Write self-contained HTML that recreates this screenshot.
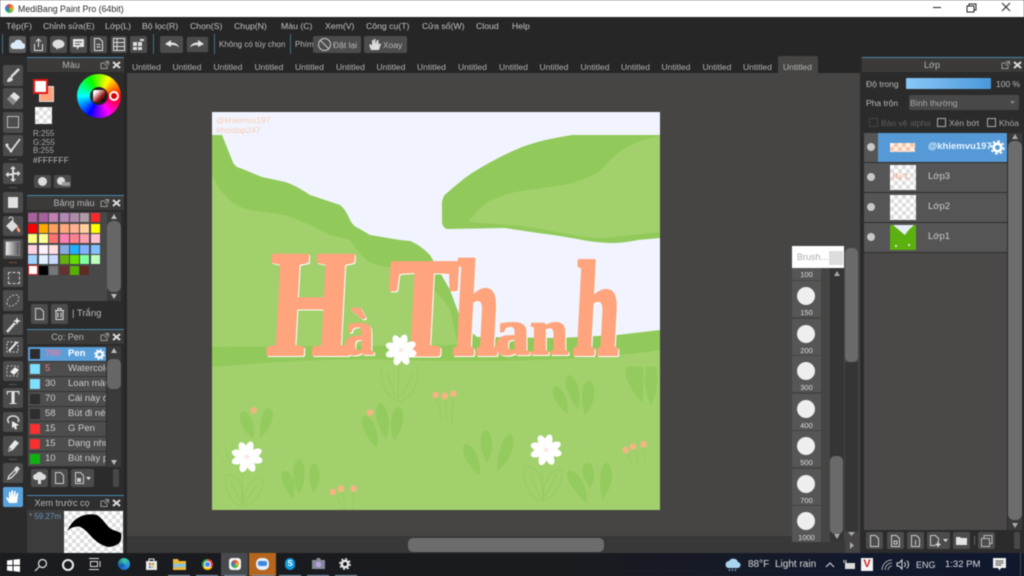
<!DOCTYPE html>
<html><head><meta charset="utf-8"><style>
html,body{margin:0;padding:0;background:#262626}
body{width:1024px;height:576px;overflow:hidden;position:relative;background:#262626;font-family:"Liberation Sans","Noto Sans CJK SC",sans-serif;font-size:9px;color:#c4c4c4;filter:blur(.4px)}
div,span.a,svg.a{position:absolute}
.t{position:absolute;white-space:nowrap;line-height:12px}
.m{position:absolute;white-space:nowrap;line-height:12px;top:20px;font-size:8.7px}
.b{position:absolute;background:#4c4c4c;border-radius:2px}
.tab{position:absolute;top:61px;white-space:nowrap;line-height:12px;color:#b4b4b4;font-size:8.5px}
.h{position:absolute;background:#3b3a39;height:14px;border-top:1px solid #4d87ad;text-align:center;line-height:15px;color:#b8b8b8;font-size:9px}
.ck{background-color:#fff;background-image:linear-gradient(45deg,#ddd 25%,transparent 25%,transparent 75%,#ddd 75%),linear-gradient(45deg,#ddd 25%,transparent 25%,transparent 75%,#ddd 75%);background-size:8px 8px;background-position:0 0,4px 4px}
.sw{position:absolute;width:9px;height:9px}
.r{position:absolute;left:28px;width:78px;height:14px;background:#4d4d4d;overflow:hidden;border-bottom:1px solid #333}
.r i{position:absolute;left:2px;top:2px;width:10px;height:10px;display:block}
.r b{position:absolute;left:17px;top:1px;font-weight:normal;line-height:12px;font-size:9.5px;color:#ccc}
.r u{position:absolute;left:40px;top:1px;text-decoration:none;line-height:12px;font-size:9.5px;color:#ccc;white-space:nowrap}
.lay{position:absolute;left:864px;width:143px;height:29px;background:#555;border-bottom:1px solid #2d2d2d}
.lay em{position:absolute;left:3px;top:10px;width:8px;height:8px;border-radius:50%;background:#c8c8c8;display:block}
.lay s{position:absolute;left:26px;top:2px;width:26px;height:25px;display:block}
.lay u{position:absolute;left:64px;top:8px;text-decoration:none;color:#ccc;font-size:9.5px;line-height:12px;white-space:nowrap}
.bi{position:absolute;left:792px;width:29px;height:36px;background:#565656}
.bi i{position:absolute;left:5px;top:6px;width:18px;height:18px;border-radius:50%;background:#eee;display:block}
.bi b{position:absolute;left:0;width:29px;top:27px;text-align:center;font-weight:normal;font-size:7.5px;line-height:10px;color:#ddd}
.ul{position:absolute;top:575px;height:1px;width:22px;background:#8fa8c0}
</style></head><body>

<div style="left:0;top:0;width:1024px;height:17px;background:#fff"></div>
<div style="left:5px;top:4px;width:9px;height:9px;border-radius:50%;background:conic-gradient(#e84a3c,#f2b233,#3cb54a,#2a7fd0,#e84a3c)"></div>
<div class="t" style="left:18px;top:3px;color:#2a2a2a;font-size:8.8px">MediBang Paint Pro (64bit)</div>
<svg class="a" style="left:930px;top:0" width="94" height="17" fill="none" stroke="#222" stroke-width="1"><path d="M3 7.500h8"/><path d="M37 6h7v6h-7zM39 6V4h7v6h-2"/><path d="M72 3l8 8M80 3l-8 8"/></svg>

<div class="m" style="left:6px">Tệp(F)</div>
<div class="m" style="left:43px">Chỉnh sửa(E)</div>
<div class="m" style="left:105px">Lớp(L)</div>
<div class="m" style="left:142px">Bộ lọc(R)</div>
<div class="m" style="left:190px">Chọn(S)</div>
<div class="m" style="left:234px">Chụp(N)</div>
<div class="m" style="left:281px">Màu (C)</div>
<div class="m" style="left:325px">Xem(V)</div>
<div class="m" style="left:366px">Công cụ(T)</div>
<div class="m" style="left:422px">Cửa sổ(W)</div>
<div class="m" style="left:476px">Cloud</div>
<div class="m" style="left:512px">Help</div>

<div style="left:2px;top:34px;width:1px;height:20px;background:#3f6f90"></div>
<div class="b" style="left:9px;top:36px;width:17px;height:17px;background:#5d5d5d"></div>
<svg class="a" style="left:10px;top:38px" width="15" height="13"><path d="M3 11h9a3 3 0 0 0 .5-6A4.500 4.500 0 0 0 4 4.500a3.300 3.300 0 0 0-1 6.500z" fill="#dcebf8"/></svg>
<div class="b" style="left:30px;top:36px;width:17px;height:17px"></div>
<svg class="a" style="left:30px;top:36px" width="17" height="17" fill="none" stroke="#ddd"><path d="M4.500 8v6.500h8V8M8.500 11V3M6 5.500l2.500-2.500 2.500 2.500"/></svg>
<div class="b" style="left:50px;top:36px;width:17px;height:17px"></div>
<svg class="a" style="left:50px;top:36px" width="17" height="17"><ellipse cx="8.500" cy="8" rx="6" ry="4.500" fill="#ddd"/><path d="M6 11l1 3 2-3z" fill="#ddd"/></svg>
<div class="b" style="left:70px;top:36px;width:17px;height:17px"></div>
<svg class="a" style="left:70px;top:36px" width="17" height="17"><path d="M3 3h11v8H9l-2 3v-3H3z" fill="#e4e4e4"/><path d="M5 6h7M5 8.500h5" stroke="#555"/></svg>
<div class="b" style="left:90px;top:36px;width:17px;height:17px"></div>
<svg class="a" style="left:90px;top:36px" width="17" height="17" fill="none" stroke="#ddd"><path d="M4.500 2.500h5l3 3v9h-8zM6.500 8.500h4M6.500 11h4"/></svg>
<div class="b" style="left:111px;top:36px;width:16px;height:17px"></div>
<svg class="a" style="left:111px;top:36px" width="16" height="17" fill="none" stroke="#ddd"><path d="M2.500 2.500h11v12h-11zM2.500 6.500h11M2.500 10.500h11M6 2.500v12"/></svg>
<div class="b" style="left:130px;top:36px;width:17px;height:17px"></div>
<svg class="a" style="left:130px;top:36px" width="17" height="17"><path d="M3 6h4v4H3zM8 6h4v4H8zM3 11h4v3H3zM8 11h4v3H8zM10 3h4v2h-4z" fill="#ddd"/></svg>
<div style="left:153px;top:34px;width:1px;height:20px;background:#3f6f90"></div>
<div class="b" style="left:160px;top:36px;width:23px;height:17px"></div>
<svg class="a" style="left:160px;top:36px" width="23" height="17"><path d="M5 8l6-4v2.500c4 0 7 1.500 8 5-2-2-4-2.500-8-2.500V11z" fill="#e4e4e4"/></svg>
<div class="b" style="left:186px;top:36px;width:23px;height:17px;border:1px solid #2b2b2b;box-sizing:border-box"></div>
<svg class="a" style="left:186px;top:36px" width="23" height="17"><path d="M18 8l-6-4v2.500c-4 0-7 1.500-8 5 2-2 4-2.500 8-2.500V11z" fill="#e4e4e4"/></svg>
<div style="left:214px;top:34px;width:1px;height:20px;background:#3f6f90"></div>
<div class="t" style="left:219px;top:39px;font-size:8px;color:#bbb">Không có tùy chọn</div>
<div style="left:290px;top:34px;width:1px;height:20px;background:#3f6f90"></div>
<div class="t" style="left:295px;top:39px;font-size:8px;color:#bbb">Phím</div>
<div class="b" style="left:313px;top:36px;width:48px;height:17px"></div>
<svg class="a" style="left:317px;top:37px" width="15" height="15" fill="none" stroke="#ccc"><circle cx="7.500" cy="7.500" r="6"/><path d="M3.500 3.500l8 8"/></svg>
<div class="t" style="left:333px;top:39px;font-size:8.500px;color:#bbb">Đặt lại</div>
<div class="b" style="left:364px;top:36px;width:43px;height:17px"></div>
<svg class="a" style="left:367px;top:37px" width="15" height="15"><path d="M4 13L2 8l2-1 1 2V3h1.500v4L7 2h1.500v5L10 3h1.500v5l1.500-2 1 1-2 6z" fill="#ddd"/></svg>
<div class="t" style="left:383px;top:39px;font-size:8.500px;color:#bbb">Xoay</div>

<div style="left:127px;top:73px;width:733px;height:480px;background:#464544"></div>
<div style="left:124px;top:56px;width:3px;height:497px;background:#262626"></div>

<div class="tab" style="left:132px">Untitled</div><div class="tab" style="left:172.500px">Untitled</div><div class="tab" style="left:213.500px">Untitled</div><div class="tab" style="left:254.500px">Untitled</div><div class="tab" style="left:295px">Untitled</div><div class="tab" style="left:336px">Untitled</div><div class="tab" style="left:376.500px">Untitled</div><div class="tab" style="left:417px">Untitled</div><div class="tab" style="left:458px">Untitled</div><div class="tab" style="left:499px">Untitled</div><div class="tab" style="left:539.500px">Untitled</div><div class="tab" style="left:580.500px">Untitled</div><div class="tab" style="left:621px">Untitled</div><div class="tab" style="left:661.500px">Untitled</div><div class="tab" style="left:702.500px">Untitled</div><div class="tab" style="left:743px">Untitled</div>
<div style="left:778px;top:56px;width:40px;height:17px;background:#464544;border-radius:2px 2px 0 0"></div>
<div class="tab" style="left:783px">Untitled</div>

<div style="left:0;top:56px;width:27px;height:497px;background:#2b2b2b"></div>
<div class="b" style="left:3px;top:65px;width:20px;height:21px"></div>
<svg class="a" style="left:3px;top:65px" width="20" height="21"><path d="M16 4L8 12" stroke="#ddd" stroke-width="2.500"/><path d="M4 17c0-3 2-5 4-5l2 2c0 2-3 3-6 3z" fill="#ddd"/></svg>
<div class="b" style="left:3px;top:88px;width:20px;height:21px"></div>
<svg class="a" style="left:3px;top:88px" width="20" height="21"><path d="M4 11l7-7 6 5-7 8z" fill="#e2e2e2"/><path d="M4 11l3-3 6 5-3 4z" fill="#888"/></svg>
<div class="b" style="left:3px;top:112px;width:20px;height:21px"></div>
<div style="left:7px;top:116px;width:10px;height:10px;border:1.500px solid #bbb"></div>
<div class="b" style="left:3px;top:135px;width:20px;height:21px"></div>
<svg class="a" style="left:3px;top:135px" width="20" height="21"><path d="M3 10l5 6 9-12" fill="none" stroke="#ddd" stroke-width="1.800"/><circle cx="4" cy="10" r="1.500" fill="#ddd"/><circle cx="8" cy="16" r="1.500" fill="#ddd"/></svg>
<div style="left:9px;top:159px;width:8px;height:1px;background:#555"></div>
<div class="b" style="left:3px;top:163px;width:20px;height:21px"></div>
<svg class="a" style="left:3px;top:163px" width="20" height="21"><path d="M10 3l3 3h-2v3.500h3.500v-2l3 3-3 3v-2H11V16h2l-3 3-3-3h2v-3.500H5.500v2l-3-3 3-3v2H9V6H7z" fill="#ddd"/></svg>
<div style="left:9px;top:187px;width:8px;height:1px;background:#555"></div>
<div class="b" style="left:3px;top:192px;width:20px;height:21px"></div>
<div style="left:8px;top:197px;width:10px;height:11px;background:#e0e0e0"></div>
<div class="b" style="left:3px;top:216px;width:20px;height:20px"></div>
<svg class="a" style="left:3px;top:216px" width="20" height="20"><path d="M3 10l6-6 6 6-6 6z" fill="#ddd"/><path d="M14 10c2 2 4 4 3 6-2 1-4-2-3-6z" fill="#ff9c70"/><path d="M6 3a2 2 0 0 1 4 0v5" fill="none" stroke="#ddd"/></svg>
<div class="b" style="left:3px;top:239px;width:20px;height:20px"></div>
<div style="left:5px;top:241px;width:15px;height:15px;background:linear-gradient(90deg,#eee,#555);border:1px solid #888;box-sizing:border-box"></div>
<div style="left:9px;top:262px;width:8px;height:1px;background:#7a4a42"></div>
<div class="b" style="left:3px;top:267px;width:20px;height:20px"></div>
<div style="left:8px;top:272px;width:10px;height:10px;border:1px dashed #ccc"></div>
<div class="b" style="left:3px;top:290px;width:20px;height:21px"></div>
<svg class="a" style="left:3px;top:290px" width="20" height="21"><path d="M4 14c-1-5 5-10 10-9 4 2 1 8-3 10-3 2-6 1-7-1z" fill="none" stroke="#bbb" stroke-dasharray="2 1.500"/></svg>
<div class="b" style="left:3px;top:314px;width:20px;height:21px"></div>
<svg class="a" style="left:3px;top:314px" width="20" height="21"><path d="M4 18L12 9" stroke="#ddd" stroke-width="2.500"/><path d="M14 3l1 3 3 1-3 1-1 3-1-3-3-1 3-1z" fill="#eee"/></svg>
<div class="b" style="left:3px;top:337px;width:20px;height:20px"></div>
<svg class="a" style="left:3px;top:337px" width="20" height="20"><path d="M4 5h11v10H4z" fill="none" stroke="#ccc" stroke-dasharray="2 1.500"/><path d="M6 14l8-9" stroke="#eee" stroke-width="2"/></svg>
<div class="b" style="left:3px;top:361px;width:20px;height:20px"></div>
<svg class="a" style="left:3px;top:361px" width="20" height="20"><path d="M4 5h11v10H4z" fill="none" stroke="#bbb" stroke-dasharray="2 1.500"/><path d="M7 11l5-5 4 3-5 5z" fill="#eee"/></svg>
<div style="left:9px;top:384px;width:8px;height:1px;background:#555"></div>
<div class="b" style="left:3px;top:388px;width:20px;height:20px"></div>
<div class="t" style="left:3px;top:388px;width:20px;text-align:center;font-family:'Liberation Serif',serif;font-weight:bold;font-size:20px;line-height:20px;color:#e4e4e4">T</div>
<div class="b" style="left:3px;top:412px;width:20px;height:20px"></div>
<svg class="a" style="left:3px;top:412px" width="20" height="20"><path d="M6 11C3 7 6 4 10 4s7 3 5 6" fill="none" stroke="#ddd" stroke-width="1.500"/><path d="M9 9l7 4-3 1 1 3-2 .5-1-3-2 2z" fill="#eee"/></svg>
<div class="b" style="left:3px;top:436px;width:20px;height:20px"></div>
<svg class="a" style="left:3px;top:436px" width="20" height="20"><path d="M5 16l1-5 6-7 4 3-6 7z" fill="#e8e8e8"/><path d="M5 16l1-5 3 2z" fill="#999"/></svg>
<div style="left:9px;top:459px;width:8px;height:1px;background:#555"></div>
<div class="b" style="left:3px;top:463px;width:20px;height:20px"></div>
<svg class="a" style="left:3px;top:463px" width="20" height="20"><path d="M5 16l1-3 6-6 2 2-6 6z" fill="none" stroke="#ddd" stroke-width="1.300"/><path d="M11 6l3-3 3 3-3 3z" fill="#ddd"/></svg>
<div class="b" style="left:3px;top:487px;width:20px;height:20px;background:#5ba3dc"></div>
<svg class="a" style="left:3px;top:487px" width="20" height="20"><path d="M6 16l-3-5 1.500-1L6 12V5h1.500v5L8.500 3.500H10l.3 6.500 1-6h1.500l-.5 6.500 1.500-4.500h1.500L14 16z" fill="#fff"/></svg>

<div style="left:27px;top:57px;width:97px;height:138px;background:#2b2b2b"></div>
<div class="h" style="left:27px;top:57px;width:97px"><span style="margin-right:9px">Màu</span></div>
<svg class="a" style="left:99px;top:60px" width="24" height="10"><path d="M2 3h4M2 3v5.500h6V5M6 1.500h3.500V5M9 2L5.500 5.500" fill="none" stroke="#999"/><path d="M14 2l7 6M21 2l-7 6" stroke="#ddd" stroke-width="2"/></svg>
<div style="left:39px;top:86px;width:15px;height:16px;background:#ffa47c;border:1px solid #ddd;box-sizing:border-box"></div>
<div style="left:33px;top:79px;width:15px;height:15px;background:#fff;border:2px solid #e01818;box-sizing:border-box"></div>
<div class="ck" style="left:35px;top:107px;width:17px;height:17px"></div>
<div style="left:77px;top:74px;width:44px;height:44px;border-radius:50%;background:conic-gradient(from 90deg,#f00,#f0f 17%,#00f 33%,#0ff 50%,#0f0 67%,#ff0 83%,#f00)"></div>
<div style="left:90px;top:87px;width:18px;height:18px;border-radius:50%;background:#222"></div>
<div style="left:93px;top:90px;width:12px;height:12px;border-radius:2px;background:linear-gradient(135deg,#fff 20%,#a02020 60%,#111 85%)"></div>
<div style="left:109px;top:91px;width:10px;height:10px;border-radius:50%;border:2px solid #fff;background:#d80000;box-sizing:border-box"></div>
<div class="t" style="left:33px;top:128px;font-size:8px;color:#aaa">R:255</div>
<div class="t" style="left:33px;top:137px;font-size:8px;color:#aaa">G:255</div>
<div class="t" style="left:33px;top:145px;font-size:8px;color:#aaa">B:255</div>
<div class="t" style="left:33px;top:154px;font-size:8.500px;color:#bbb">#FFFFFF</div>
<div class="b" style="left:34px;top:175px;width:17px;height:13px"></div>
<div style="left:38px;top:177px;width:9px;height:9px;border-radius:50%;background:#ddd"></div>
<div class="b" style="left:54px;top:175px;width:17px;height:13px"></div>
<div style="left:57px;top:177px;width:8px;height:8px;border-radius:50%;background:#ddd"></div>
<div style="left:62px;top:182px;width:8px;height:4px;background:#999"></div>

<div style="left:27px;top:195px;width:97px;height:134px;background:#2b2b2b"></div>
<div class="h" style="left:27px;top:195px;width:97px"><span style="margin-right:3px">Bảng màu</span></div>
<svg class="a" style="left:99px;top:198px" width="24" height="10"><path d="M2 3h4M2 3v5.500h6V5M6 1.500h3.500V5M9 2L5.500 5.500" fill="none" stroke="#999"/><path d="M14 2l7 6M21 2l-7 6" stroke="#ddd" stroke-width="2"/></svg>
<div style="left:28px;top:212px;width:79px;height:89px;background:#484848"></div>
<div class="sw" style="left:28.300px;top:213px;background:#a8609e"></div><div class="sw" style="left:38.700px;top:213px;background:#a8609e"></div><div class="sw" style="left:49px;top:213px;background:#c080b0"></div><div class="sw" style="left:59.500px;top:213px;background:#b388b4"></div><div class="sw" style="left:70px;top:213px;background:#ac8ca8"></div><div class="sw" style="left:80.300px;top:213px;background:#b09ca8"></div><div class="sw" style="left:91px;top:213px;background:#f82a2a"></div>
<div class="sw" style="left:28.300px;top:223.500px;background:#fa0000"></div><div class="sw" style="left:38.700px;top:223.500px;background:#ffa800"></div><div class="sw" style="left:49px;top:223.500px;background:#ff9f60"></div><div class="sw" style="left:59.500px;top:223.500px;background:#ffa880"></div><div class="sw" style="left:70px;top:223.500px;background:#ffb090"></div><div class="sw" style="left:80.300px;top:223.500px;background:#ffd0a0"></div><div class="sw" style="left:91px;top:223.500px;background:#ffff00"></div>
<div class="sw" style="left:28.300px;top:234px;background:#ffff80"></div><div class="sw" style="left:38.700px;top:234px;background:#ffff99"></div><div class="sw" style="left:49px;top:234px;background:#ff7070"></div><div class="sw" style="left:59.500px;top:234px;background:#ff80b0"></div><div class="sw" style="left:70px;top:234px;background:#ff8090"></div><div class="sw" style="left:80.300px;top:234px;background:#ffa0b0"></div><div class="sw" style="left:91px;top:234px;background:#ffc0d0"></div>
<div class="sw" style="left:28.300px;top:244.500px;background:#ffd0e0"></div><div class="sw" style="left:38.700px;top:244.500px;background:#fff0ff"></div><div class="sw" style="left:49px;top:244.500px;background:#ffdde0"></div><div class="sw" style="left:59.500px;top:244.500px;background:#88aae0"></div><div class="sw" style="left:70px;top:244.500px;background:#20b0ff"></div><div class="sw" style="left:80.300px;top:244.500px;background:#80b0ff"></div><div class="sw" style="left:91px;top:244.500px;background:#80c0ff"></div>
<div class="sw" style="left:28.300px;top:255px;background:#a0d0ff"></div><div class="sw" style="left:38.700px;top:255px;background:#e0f0ff"></div><div class="sw" style="left:49px;top:255px;background:#c8d8ff"></div><div class="sw" style="left:59.500px;top:255px;background:#66b010"></div><div class="sw" style="left:70px;top:255px;background:#66dd00"></div><div class="sw" style="left:80.300px;top:255px;background:#80ff9f"></div><div class="sw" style="left:91px;top:255px;background:#c0ffc0"></div>
<div class="sw" style="left:28px;top:265px;width:10px;height:10px;background:#fff;border:1.500px solid #d82020;box-sizing:border-box"></div><div class="sw" style="left:38.700px;top:265.500px;background:#000"></div><div class="sw" style="left:49px;top:265.500px;background:#777"></div><div class="sw" style="left:59.500px;top:265.500px;background:#663030"></div><div class="sw" style="left:70px;top:265.500px;background:#55b000"></div><div class="sw" style="left:80.300px;top:265.500px;background:#5c2c20"></div>
<div style="left:107px;top:212px;width:14px;height:89px;background:#3a3a3a"></div>
<div style="left:107px;top:221px;width:14px;height:71px;background:#666;border-radius:6px"></div>
<svg class="a" style="left:110px;top:214px" width="8" height="86" fill="#bbb"><path d="M4 0l3 5H1zM1 80h6l-3 5z"/></svg>
<div class="b" style="left:31px;top:304px;width:17px;height:20px"></div>
<svg class="a" style="left:31px;top:304px" width="17" height="20" fill="none" stroke="#ccc"><path d="M4.500 4.500h5l3 3v8h-8z"/></svg>
<div class="b" style="left:51px;top:304px;width:17px;height:20px"></div>
<svg class="a" style="left:51px;top:304px" width="17" height="20" fill="none" stroke="#ddd"><path d="M4 6.500h9M5 6.500v9h7v-9M7 8.500v5M10 8.500v5M7 6.500v-2h3v2"/></svg>
<div class="t" style="left:72px;top:308px;font-size:9.500px;color:#bbb">| Trắng</div>

<div style="left:27px;top:329px;width:97px;height:166px;background:#2b2b2b"></div>
<div class="h" style="left:27px;top:329px;width:97px"><span style="margin-right:16px">Cọ: Pen</span></div>
<svg class="a" style="left:99px;top:332px" width="24" height="10"><path d="M2 3h4M2 3v5.500h6V5M6 1.500h3.500V5M9 2L5.500 5.500" fill="none" stroke="#999"/><path d="M14 2l7 6M21 2l-7 6" stroke="#ddd" stroke-width="2"/></svg>
<div class="r" style="top:347px;background:#5b9fd8"><i style="background:#2c2c2c"></i><b style="color:#e87a9a;font-weight:bold">700</b><u style="color:#fff;font-weight:bold">Pen</u></div>
<svg class="a" style="left:94px;top:349px" width="11" height="11"><circle cx="5.500" cy="5.500" r="3" fill="none" stroke="#fff" stroke-width="2.200"/><circle cx="5.500" cy="5.500" r="4.800" fill="none" stroke="#fff" stroke-width="1.200" stroke-dasharray="2 1.800"/></svg>
<div class="r" style="top:362px"><i style="background:#7fdfff"></i><b style="color:#e08090">5</b><u>Watercolor</u></div>
<div class="r" style="top:377px"><i style="background:#7fdfff"></i><b>30</b><u>Loan màu</u></div>
<div class="r" style="top:392px"><i style="background:#2e2e2e"></i><b>70</b><u>Cái này đi</u></div>
<div class="r" style="top:407px"><i style="background:#2e2e2e"></i><b>58</b><u>Bút đi nét</u></div>
<div class="r" style="top:422px"><i style="background:#f83030"></i><b>15</b><u>G Pen</u></div>
<div class="r" style="top:437px"><i style="background:#f83030"></i><b>15</b><u>Dạng nhu</u></div>
<div class="r" style="top:452px;height:14px"><i style="background:#10b010"></i><b>10</b><u>Bút này p</u></div>
<div style="left:107px;top:346px;width:14px;height:121px;background:#3a3a3a"></div>
<div style="left:107px;top:359px;width:14px;height:30px;background:#666;border-radius:5px"></div>
<svg class="a" style="left:110px;top:348px" width="8" height="118" fill="#bbb"><path d="M4 0l3 5H1zM1 112h6l-3 5z"/></svg>
<div class="b" style="left:31px;top:469px;width:17px;height:18px"></div>
<svg class="a" style="left:31px;top:469px" width="17" height="18"><path d="M5 11a3 3 0 0 1 0-6 4 4 0 0 1 7 0 3 3 0 0 1 0 6h-2v4H7v-4z" fill="#ddd"/></svg>
<div class="b" style="left:51px;top:469px;width:17px;height:18px"></div>
<svg class="a" style="left:51px;top:469px" width="17" height="18" fill="none" stroke="#ccc"><path d="M4.500 3.500h5l3 3v8h-8z"/></svg>
<div class="b" style="left:71px;top:469px;width:23px;height:18px"></div>
<svg class="a" style="left:71px;top:469px" width="23" height="18"><path d="M4.500 3.500h5l3 3v8h-8z" fill="none" stroke="#ccc"/><path d="M6 9h4v4H6z" fill="#ccc"/><path d="M15 8h5l-2.500 3z" fill="#ddd"/></svg>
<div style="left:113px;top:469px;width:6px;height:18px;background:#484848;border-radius:2px"></div>

<div style="left:27px;top:495px;width:97px;height:58px;background:#3c3c3c"></div>
<div class="h" style="left:27px;top:495px;width:97px;background:#2f2f2f"><span style="margin-right:27px">Xem trước cọ</span></div>
<svg class="a" style="left:99px;top:498px" width="24" height="10"><path d="M2 3h4M2 3v5.500h6V5M6 1.500h3.500V5M9 2L5.500 5.500" fill="none" stroke="#999"/><path d="M14 2l7 6M21 2l-7 6" stroke="#ddd" stroke-width="2"/></svg>
<div class="t" style="left:29px;top:511px;font-size:8px;color:#6a93b8">* 59.27m</div>
<div class="ck" style="left:64px;top:511px;width:59px;height:42px"></div>
<svg class="a" style="left:64px;top:511px" width="59" height="42"><path d="M3 20C7 12 11 8 16 5.700 22 3 28 3 33 4 39 8 42 14 46 17.300 50 20 54 20 57 22.300 58 26 57 30 55 32.300 50 36 46 36 43 35.700 37 34 33 31 29 27.300 25 23 21 18 16 15.700 11 15 6 17 3 20z" fill="#000"/></svg>

<svg class="a" style="left:212px;top:112px" width="448" height="398" viewBox="212 112 448 398">
<rect x="212" y="112" width="448" height="398" fill="#f1f4fe"/>
<path d="M212 135H222L232 160C234 166 238 168 240 168L262 177 285 182C295 185 302 190 310 195L340 205C346 210 348 216 350 220S355 227 358 228L370 235 400 240 410 241C418 244 425 250 430 255L450 290 463 325 477 337 560 338 617 335 660 330V510H212Z" fill="#91c95b"/>
<path d="M212 175C216 183 220 190 225 195 232 203 240 208 250 210 262 212 275 213 285 215 300 220 318 228 330 235L350 240C356 248 362 257 370 262 380 267 390 267 400 268 408 270 416 275 423 280 435 290 445 300 450 310L458 345 212 347Z" fill="#a2d06c"/>
<path d="M212 367C280 361 340 358 400 360 480 362 580 362 660 350V510H212Z" fill="#a2d06c"/>
<path d="M442 202C443 197 445 194 447 193 455 186 463 179 472 173 488 163 505 154 522 147 533 143 544 140 555 138L572 135H660V238L638 240C628 242 620 243 612 243 604 243 596 242 588 241 572 238 555 235 538 233L505 228 447 229C444 228 442 225 442 222Z" fill="#91c95b"/>
<path d="M468 222C474 214 480 207 488 202 497 197 506 194 515 192 534 189 553 187 572 183 581 180 590 177 598 172 605 166 611 159 618 153 626 147 634 143 642 140L660 136V232L605 238C594 238 583 237 572 235 555 232 538 228 522 226Z" fill="#a2d06c"/>
<text x="216" y="123" font-family="Liberation Sans" font-size="8.500" fill="#f8cdb4">@khiemvu197</text>
<text x="216" y="133" font-family="Liberation Sans" font-size="8.500" fill="#f8cdb4">#hoidap247</text>

<g transform="translate(210 370) scale(.3333)" fill="#93cb5e">
<path d="M130 205C100 185 80 145 95 125 115 120 140 160 130 205ZM150 205C150 160 155 120 175 113 200 120 190 170 150 205Z"/>
<path d="M250 388C225 360 205 320 220 302 245 300 260 340 250 388ZM268 370C245 340 245 280 265 265 290 270 290 340 268 370ZM310 368C295 340 295 290 310 280 335 285 335 340 310 368Z"/>
<path d="M500 232C470 205 445 160 460 138 485 135 510 180 500 232ZM527 205C495 165 490 110 510 100 535 105 545 170 527 205ZM552 212C535 170 545 115 565 110 590 120 580 180 552 212Z"/>
<path d="M810 318C780 295 745 245 765 222 790 220 815 270 810 318ZM830 280C810 240 805 190 825 180 850 185 855 240 830 280ZM862 305C860 260 875 200 900 192 925 205 905 270 862 305Z"/>
<path d="M1130 400C1100 370 1060 325 1075 302 1100 295 1135 350 1130 400ZM1140 355C1115 320 1110 285 1130 278 1155 280 1160 325 1140 355ZM1178 388C1165 340 1170 285 1190 278 1215 290 1210 350 1178 388Z"/>
<path d="M1072 130C1045 110 1015 70 1035 48 1055 50 1080 90 1072 130ZM1105 118C1075 80 1055 30 1075 15 1105 20 1115 80 1105 118ZM1125 135C1110 90 1115 40 1135 30 1165 40 1155 105 1125 135Z"/>
<path d="M1298 100C1270 70 1235 20 1250-10H1300ZM1322 105C1305 60 1300 20 1310-10H1340C1345 40 1340 80 1322 105Z"/>
</g>
<g transform="translate(210 370) scale(.3333)" fill="none" stroke="#96cc62" stroke-width="3">
<path d="M100 410C60 400 40 350 50 315 85 310 105 360 100 410ZM100 410C130 400 165 370 158 325 125 320 100 360 100 410ZM96 410V300M60 330L90 395M145 340L105 395"/>
<path d="M1000 392C960 385 935 340 945 290 985 285 1005 340 1000 392ZM1000 392C1035 380 1060 340 1055 300 1020 295 995 345 1000 392ZM997 392V270M960 310L990 380M1040 315L1005 380"/>
<path d="M568 95C530 85 510 40 515-10M568 95C610 80 630 40 620-10M565 95V-10M530 10L558 80M610 10L575 80"/>
<path d="M20 240L45 290M40 210L60 280M65 215L72 270" stroke-width="2"/>
<path d="M680 85L697 150M705 85L712 155M730 75L725 165M380 375L398 420M395 365L408 420M430 365L428 420M1250 245L1268 290M1270 235L1285 280M1302 230L1305 275" stroke-width="3"/>
</g>
<g transform="translate(210 370) scale(.3333)" fill="#f4b583">
<circle cx="131" cy="121" r="10"/><circle cx="480" cy="128" r="10"/><circle cx="677" cy="75" r="10"/><circle cx="704" cy="78" r="10"/><circle cx="730" cy="71" r="10"/><circle cx="369" cy="366" r="10"/><circle cx="393" cy="356" r="10"/><circle cx="431" cy="356" r="10"/><circle cx="1247" cy="240" r="10"/><circle cx="1269" cy="230" r="10"/><circle cx="1301" cy="223" r="10"/>
</g>

<g font-family="'Liberation Serif',serif" font-weight="bold" fill="#ffa47c" stroke="#ffa47c" stroke-linejoin="round" style="filter:drop-shadow(1.500px 1px 0 #fff)">
<text transform="translate(266 354) skewX(-3) scale(.72 1)" font-size="150" stroke-width="4">H</text>
<text transform="translate(344 354) scale(.92 1)" font-size="66" stroke-width="1.500">à</text>
<text transform="translate(386 354) skewX(-3) scale(.74 1)" font-size="138" stroke-width="5">T</text>
<text transform="translate(452 354) skewX(-3) scale(.6 1)" font-size="136" stroke-width="4">h</text>
<text transform="translate(495 354) scale(1.05 1)" font-size="66" stroke-width="2">a</text>
<text transform="translate(530 354) scale(1.05 1)" font-size="66" stroke-width="2">n</text>
<text transform="translate(572 354) skewX(-3) scale(.62 1)" font-size="134" stroke-width="4">h</text>
</g>

<g fill="#fff">
<g transform="translate(247 457)"><ellipse rx="4" ry="7" cy="-9" transform="rotate(-25)"/><ellipse rx="4" ry="7" cy="-9" transform="rotate(15)"/><ellipse rx="4" ry="7" cy="-9" transform="rotate(65)"/><ellipse rx="4" ry="7" cy="-9" transform="rotate(105)"/><ellipse rx="4" ry="7" cy="-9" transform="rotate(155)"/><ellipse rx="4" ry="7" cy="-9" transform="rotate(200)"/><ellipse rx="4" ry="7" cy="-9" transform="rotate(250)"/><ellipse rx="4" ry="7" cy="-9" transform="rotate(290)"/><circle r="6"/><circle r="2.500" fill="#fdeaec"/></g>
<g transform="translate(546 450)"><ellipse rx="4" ry="7" cy="-9" transform="rotate(-25)"/><ellipse rx="4" ry="7" cy="-9" transform="rotate(15)"/><ellipse rx="4" ry="7" cy="-9" transform="rotate(65)"/><ellipse rx="4" ry="7" cy="-9" transform="rotate(105)"/><ellipse rx="4" ry="7" cy="-9" transform="rotate(155)"/><ellipse rx="4" ry="7" cy="-9" transform="rotate(200)"/><ellipse rx="4" ry="7" cy="-9" transform="rotate(250)"/><ellipse rx="4" ry="7" cy="-9" transform="rotate(290)"/><circle r="6"/><circle r="2.500" fill="#fdeaec"/></g>
<g transform="translate(401 350)"><ellipse rx="4" ry="7" cy="-9" transform="rotate(-25)"/><ellipse rx="4" ry="7" cy="-9" transform="rotate(15)"/><ellipse rx="4" ry="7" cy="-9" transform="rotate(65)"/><ellipse rx="4" ry="7" cy="-9" transform="rotate(105)"/><ellipse rx="4" ry="7" cy="-9" transform="rotate(155)"/><ellipse rx="4" ry="7" cy="-9" transform="rotate(200)"/><ellipse rx="4" ry="7" cy="-9" transform="rotate(250)"/><ellipse rx="4" ry="7" cy="-9" transform="rotate(290)"/><circle r="6"/><circle r="2.500" fill="#fdeaec"/></g>
</g>
</svg>

<div style="left:792px;top:246px;width:52px;height:22px;background:#fff"></div>
<div class="t" style="left:797px;top:251px;font-size:9px;color:#aaa">Brush...</div>
<div style="left:829px;top:251px;width:14px;height:14px;background:#ddd"></div>
<div style="left:792px;top:268px;width:29px;height:12px;background:#565656"></div>
<div class="t" style="left:792px;top:270px;width:29px;text-align:center;font-size:7.500px;line-height:10px;color:#ddd">100</div>
<div class="bi" style="top:281px"><i></i><b>150</b></div>
<div class="bi" style="top:318.500px"><i></i><b>200</b></div>
<div class="bi" style="top:356px"><i></i><b>300</b></div>
<div class="bi" style="top:393.500px"><i></i><b>400</b></div>
<div class="bi" style="top:431px"><i></i><b>500</b></div>
<div class="bi" style="top:468.500px"><i></i><b>700</b></div>
<div class="bi" style="top:506px;height:36px"><i></i><b>1000</b></div>
<div style="left:830px;top:268px;width:14px;height:276px;background:#353535"></div>
<div style="left:830px;top:456px;width:13px;height:78px;background:#6a6a6a;border-radius:5px"></div>
<svg class="a" style="left:833px;top:270px" width="8" height="272" fill="#aaa"><path d="M4 1l3 5H1zM1 264h6l-3 5z"/></svg>
<div style="left:845px;top:248px;width:13px;height:114px;background:#6a6a6a;border-radius:5px"></div>
<div style="left:845px;top:362px;width:13px;height:170px;background:#353535"></div>
<svg class="a" style="left:847px;top:530px" width="10" height="22" fill="#aaa"><path d="M1 2h7l-3.500 4zM3 12l4 3.500-4 3.500z"/></svg>
<div style="left:127px;top:536px;width:665px;height:17px;background:#383838"></div>
<div style="left:792px;top:542px;width:53px;height:11px;background:#383838"></div>
<div style="left:408px;top:538px;width:196px;height:14px;background:#6c6c6c;border-radius:5px"></div>

<div style="left:860px;top:56px;width:164px;height:497px;background:#2b2b2b"></div>
<div class="h" style="left:862px;top:57px;width:162px"><span style="margin-right:22px">Lớp</span></div>
<svg class="a" style="left:1000px;top:60px" width="24" height="10"><path d="M2 3h4M2 3v5.500h6V5M6 1.500h3.500V5M9 2L5.500 5.500" fill="none" stroke="#999"/><path d="M14 2l7 6M21 2l-7 6" stroke="#ddd" stroke-width="2"/></svg>
<div class="t" style="left:866px;top:78px;font-size:8.500px;color:#bbb">Độ trong</div>
<div style="left:906px;top:78px;width:85px;height:11px;background:linear-gradient(90deg,#8ac8f8,#4a98d8);border-radius:1px"></div>
<div class="t" style="left:996px;top:78px;font-size:8.500px;color:#bbb">100 %</div>
<div class="t" style="left:866px;top:97px;font-size:8.500px;color:#bbb">Pha trộn</div>
<div style="left:909px;top:95px;width:110px;height:15px;background:#484848;border-radius:2px"></div>
<div class="t" style="left:910px;top:97px;font-size:8.500px;color:#aaa">Bình thường</div>
<svg class="a" style="left:1009px;top:100px" width="8" height="5"><path d="M1 1h5L3.500 4z" fill="#888"/></svg>
<div style="left:869px;top:118px;width:7px;height:7px;border:1px solid #444"></div>
<div class="t" style="left:881px;top:117px;font-size:8.500px;color:#5e5e5e">Bảo vệ alpha</div>
<div style="left:937px;top:118px;width:7px;height:7px;border:1px solid #aaa"></div>
<div class="t" style="left:949px;top:117px;font-size:8.500px;color:#aaa">Xén bớt</div>
<div style="left:987px;top:118px;width:7px;height:7px;border:1px solid #aaa"></div>
<div class="t" style="left:999px;top:117px;font-size:8.500px;color:#aaa">Khóa</div>
<div style="left:864px;top:133px;width:143px;height:397px;background:#4a4948"></div>
<div class="lay" style="top:133px"><em></em></div>
<div style="left:878px;top:133px;width:129px;height:29px;background:#559ad6"></div>
<div class="ck" style="left:890px;top:143px;width:25px;height:9px;background-color:#fff3ea;background-image:linear-gradient(45deg,#f9c3a4 25%,transparent 25%,transparent 75%,#f9c3a4 75%),linear-gradient(45deg,#f9c3a4 25%,transparent 25%,transparent 75%,#f9c3a4 75%)"></div>
<div class="t" style="left:928px;top:141px;font-size:9.500px;font-weight:bold;color:#e8f4ff">@khiemvu197</div>
<svg class="a" style="left:990px;top:140px" width="15" height="15"><circle cx="7.500" cy="7.500" r="3.800" fill="none" stroke="#fff" stroke-width="2.800"/><circle cx="7.500" cy="7.500" r="6.300" fill="none" stroke="#fff" stroke-width="1.800" stroke-dasharray="2.500 2.400"/></svg>
<div class="lay" style="top:163px"><em></em><s class="ck"></s><u>Lớp3</u></div>
<div class="t" style="left:892px;top:171px;font-size:8px;font-style:italic;color:#f0a47c;font-family:'Liberation Serif',serif">Hà T...</div>
<div class="lay" style="top:193px"><em></em><s class="ck"></s><u>Lớp2</u></div>
<div class="lay" style="top:223px"><em></em><s style="background:#5cb010"></s><u>Lớp1</u></div>
<svg class="a" style="left:890px;top:225px" width="26" height="25"><path d="M3 0C8 4 12 8 15 10 18 5 22 2 24 0z" fill="#e8eef8"/><circle cx="6" cy="21" r="1" fill="#fff"/><circle cx="19" cy="20" r="1" fill="#fff"/></svg>
<div style="left:1008px;top:133px;width:14px;height:397px;background:#3a3a3a"></div>
<div style="left:1008px;top:141px;width:14px;height:379px;background:#6c6c6c;border-radius:6px"></div>
<svg class="a" style="left:1011px;top:134px" width="8" height="6"><path d="M4 0l3 5H1z" fill="#aaa"/></svg>
<svg class="a" style="left:1011px;top:523px" width="8" height="6"><path d="M1 0h6L4 5z" fill="#aaa"/></svg>
<div class="b" style="left:866px;top:532px;width:17px;height:17px"></div>
<svg class="a" style="left:866px;top:532px" width="17" height="17" fill="none" stroke="#ccc"><path d="M4.500 3.500h5l3 3v8h-8z"/></svg>
<div class="b" style="left:887px;top:532px;width:17px;height:17px"></div>
<svg class="a" style="left:887px;top:532px" width="17" height="17" fill="none" stroke="#ccc"><path d="M4.500 3.500h5l3 3v8h-8zM7 9h3v3H7z"/></svg>
<div class="b" style="left:907px;top:532px;width:17px;height:17px"></div>
<svg class="a" style="left:907px;top:532px" width="17" height="17" fill="none" stroke="#ccc"><path d="M4.500 3.500h5l3 3v8h-8zM8.500 8v5"/></svg>
<div class="b" style="left:927px;top:532px;width:23px;height:17px"></div>
<svg class="a" style="left:927px;top:532px" width="23" height="17"><path d="M3.500 3.500h5l3 3v4M3.500 3.500v10h5" fill="none" stroke="#ccc"/><path d="M11 10v5M8.500 12.500h5" stroke="#ddd" stroke-width="1.500"/><path d="M16 7h5l-2.500 3z" fill="#ddd"/></svg>
<div class="b" style="left:953px;top:532px;width:17px;height:17px"></div>
<svg class="a" style="left:953px;top:532px" width="17" height="17"><path d="M3 5h4l1 1h6v7H3z" fill="#e4e4e4"/></svg>
<div style="left:974px;top:536px;width:1px;height:9px;background:#666"></div>
<div class="b" style="left:978px;top:532px;width:17px;height:17px"></div>
<svg class="a" style="left:978px;top:532px" width="17" height="17" fill="none" stroke="#bbb"><path d="M3.500 6.500h8v8h-8zM6 6.500V3.500h8v8h-2.500"/></svg>
<div style="left:1014px;top:532px;width:6px;height:17px;background:#484848;border-radius:2px"></div>

<div style="left:0;top:553px;width:1024px;height:23px;background:linear-gradient(90deg,#1b1c1f 0%,#1a1b1f 55%,#141a2c 80%,#10182e 100%)"></div>
<svg class="a" style="left:7px;top:559px" width="13" height="13" fill="#fff"><path d="M0 1.500l5.500-.8V6H0zM6.500.6L13 0v6H6.500zM0 7h5.500v5.300L0 11.500zM6.500 7H13v6l-6.500-.9z"/></svg>
<svg class="a" style="left:34px;top:558px" width="14" height="14" fill="none" stroke="#e4e4e4" stroke-width="1.200"><circle cx="8.500" cy="5.500" r="4"/><path d="M5.500 8.500L1 13"/></svg>
<div style="left:62px;top:559px;width:8px;height:8px;border:2px solid #eee;border-radius:50%"></div>
<svg class="a" style="left:88px;top:558px" width="13" height="13" fill="none" stroke="#ddd"><path d="M1 .5h10M2.500 3.500h7v5h-7zM1 11.500h10M12 3v6"/></svg>
<div style="left:118px;top:558px;width:12px;height:12px;border-radius:50%;background:conic-gradient(#3cc8a0,#2a8fe0,#1558b0,#3cc8a0)"></div>
<svg class="a" style="left:145px;top:557px" width="13" height="14"><path d="M1 4h11v9H1z" fill="#e8e8e8"/><path d="M4 4V2h5v2" fill="none" stroke="#e8e8e8"/><path d="M4 6h2v2H4z" fill="#e85030"/><path d="M7 6h2v2H7z" fill="#70b030"/><path d="M4 9h2v2H4z" fill="#3090e0"/><path d="M7 9h2v2H7z" fill="#f0c020"/></svg>
<svg class="a" style="left:173px;top:559px" width="13" height="11"><path d="M0 0h5l1 2h7v9H0z" fill="#e8b840"/><path d="M0 5h13v3H0z" fill="#7fc4ec"/></svg>
<div style="left:202px;top:559px;width:11px;height:11px;border-radius:50%;background:conic-gradient(#e94335 0 33%,#fbbc05 33% 66%,#34a853 66%)"></div>
<div style="left:205px;top:562px;width:5px;height:5px;border-radius:50%;background:#4285f4;box-shadow:0 0 0 1px #fff"></div>
<div style="left:221px;top:553px;width:27px;height:23px;background:#48494c"></div>
<div style="left:229px;top:558px;width:12px;height:12px;border-radius:3px;background:#f2f2f2"></div>
<div style="left:231px;top:560px;width:8px;height:8px;border-radius:50%;background:conic-gradient(#e84a3c,#f2b233,#3cb54a,#2a7fd0,#e84a3c)"></div>
<div style="left:249px;top:553px;width:27px;height:23px;background:#b5651d"></div>
<div style="left:256px;top:558px;width:13px;height:12px;border-radius:5px;background:#e4eefc"></div>
<div style="left:258px;top:561px;width:9px;height:5px;background:#3f87d8;border-radius:2px"></div>
<div style="left:285px;top:558px;width:10px;height:12px;border-radius:5px;background:#0f9ae0;color:#fff;text-align:center;font-size:8px;line-height:12px;font-weight:bold">S</div>
<svg class="a" style="left:312px;top:558px" width="13" height="12"><path d="M0 2h4l1-2h3l1 2h4v9H0z" fill="#85899a"/><circle cx="6.500" cy="6.500" r="2.800" fill="#b9a0e0"/></svg>
<svg class="a" style="left:339px;top:558px" width="12" height="12"><circle cx="6" cy="6" r="3.200" fill="none" stroke="#eee" stroke-width="2.400"/><circle cx="6" cy="6" r="5.200" fill="none" stroke="#eee" stroke-width="1.400" stroke-dasharray="2 2.100"/></svg>
<div class="ul" style="left:168px"></div><div class="ul" style="left:196px"></div><div class="ul" style="left:224px"></div><div class="ul" style="left:252px"></div><div class="ul" style="left:279px"></div><div class="ul" style="left:307px"></div><div class="ul" style="left:335px"></div>
<svg class="a" style="left:724px;top:557px" width="17" height="14"><path d="M4 11h9a3 3 0 0 0 1-6A5 5 0 0 0 5 4a3.600 3.600 0 0 0-1 7z" fill="#a8d4f0"/><path d="M6 12l-1 2M9 12l-1 2M12 12l-1 2" stroke="#7fc0ea"/></svg>
<div class="t" style="left:748px;top:559px;font-size:10px;color:#dcdcdc">88°F</div>
<div class="t" style="left:775px;top:559px;font-size:10px;color:#dcdcdc">Light rain</div>
<svg class="a" style="left:825px;top:561px" width="10" height="7" fill="none" stroke="#ddd"><path d="M1 6l4-4 4 4"/></svg>
<svg class="a" style="left:843px;top:560px" width="13" height="10"><path d="M2 3h10v6H2z" fill="#ddd"/><path d="M1 0v3M3 0v3" stroke="#ddd"/></svg>
<div style="left:861px;top:558px;width:12px;height:13px;background:#f4f4f4;color:#d02020;font-weight:bold;font-size:11px;line-height:13px;text-align:center">V</div>
<svg class="a" style="left:881px;top:559px" width="12" height="12" fill="none" stroke="#aaa"><path d="M1 11a10 10 0 0 1 10-10M4 11a7 7 0 0 1 7-7M7 11a4 4 0 0 1 4-4"/></svg>
<svg class="a" style="left:896px;top:558px" width="14" height="13" fill="none" stroke="#ddd"><path d="M1 5v3h2l3 3V2L3 5zM8.500 4c1 1.500 1 3.500 0 5M11 2.500c2 2.500 2 5.500 0 8"/></svg>
<div class="t" style="left:916px;top:559px;font-size:9px;color:#dcdcdc">ENG</div>
<div class="t" style="left:945px;top:559px;font-size:9.500px;color:#dcdcdc">1:32 PM</div>
<svg class="a" style="left:993px;top:558px" width="13" height="13"><path d="M0 0h13v10H8l-1.500 2.500L5 10H0z" fill="#eee"/><path d="M2.500 3h8M2.500 5h8M2.500 7h6" stroke="#222" stroke-width=".8"/></svg>
<div style="left:1020px;top:553px;width:1px;height:23px;background:#444"></div>
</body></html>
